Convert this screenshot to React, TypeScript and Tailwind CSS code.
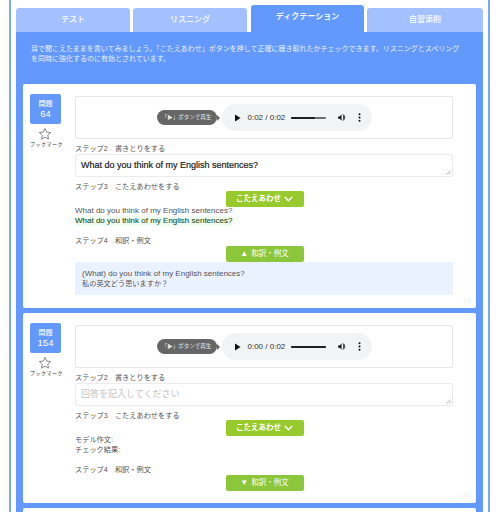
import React from "react";

const FONT = { fontFamily: '"Liberation Sans", "Noto Sans CJK JP", sans-serif' };

function Tab({ label, active, width }: { label: string; active?: boolean; width: string }) {
  return active ? (
    <div className={`flex h-[27px] ${width} items-center justify-center rounded-t-[3px] bg-[#6399fd] pb-[4px] text-[8px] font-bold text-[#f2f6ff]`}>
      {label}
    </div>
  ) : (
    <div className={`flex h-[24px] ${width} items-center justify-center rounded-t-[3px] bg-[#a2c1fe] text-[8px] font-bold text-[#eef4ff]`}>
      {label}
    </div>
  );
}

function Player({ time, progress }: { time: string; progress: number }) {
  return (
    <div className="flex h-[43px] items-center justify-center rounded-[2px] border border-[#e6e6e6]">
      <div className="relative mr-[5px] flex h-[15px] w-[60px] items-center justify-center rounded-full bg-[#666666] text-[5.5px] text-[#e4e4e4]">
        「▶」ボタンで再生
        <span className="absolute right-[-3px] h-0 w-0 border-y-[3px] border-l-[3px] border-y-transparent border-l-[#666666]" />
      </div>
      <div className="flex h-[27px] w-[150px] items-center rounded-full bg-[#f1f3f4] pl-[12px] text-[#1c1c1c]">
        <svg width="7" height="8" viewBox="0 0 7 8" className="mr-[7px]">
          <path d="M1 0.5 L6.5 4 L1 7.5 Z" fill="#111" />
        </svg>
        <span className="w-[41px] whitespace-nowrap text-[8px] text-[#333]">{time}</span>
        <div className="relative ml-[2px] h-[2px] w-[35px] rounded-full bg-[#6f6f6f]">
          <div className="h-full rounded-full bg-[#202020]" style={{ width: `${progress}%` }} />
        </div>
        <svg width="9" height="9" viewBox="0 0 24 24" className="ml-[11px]">
          <path d="M3 9v6h4l5 5V4L7 9H3z M16 7.5v9c1.5-.8 2.5-2.5 2.5-4.500S17.500 8.300 16 7.500z M15 3.500v2.200c2.900.9 5 3.500 5 6.300s-2.100 5.400-5 6.300v2.200c4-.9 7-4.500 7-8.500s-3-7.600-7-8.500z" fill="#111" />
        </svg>
        <svg width="3" height="9" viewBox="0 0 3 9" className="ml-[12px]">
          <circle cx="1.500" cy="1.200" r="1" fill="#111" />
          <circle cx="1.500" cy="4.500" r="1" fill="#111" />
          <circle cx="1.500" cy="7.800" r="1" fill="#111" />
        </svg>
      </div>
    </div>
  );
}

function GreenButton({ children, light }: { children: React.ReactNode; light?: boolean }) {
  return (
    <div className="flex justify-center pl-[1px]">
      <div
        className={`flex h-[16px] w-[78px] items-center justify-center rounded-[2px] text-[7.5px] text-white ${
          light ? "bg-[#97ca2d] font-bold" : "bg-[#8cc63a] text-[#eef7dd]"
        }`}
      >
        {children}
      </div>
    </div>
  );
}

function Chevron() {
  return (
    <svg width="9" height="6" viewBox="0 0 9 6" className="ml-[3px]">
      <path d="M0.800 1 L4.500 4.700 L8.200 1" fill="none" stroke="#fff" strokeWidth="1.500" />
    </svg>
  );
}

function Resize() {
  return (
    <svg width="5" height="5" viewBox="0 0 5 5" className="absolute bottom-[1px] right-[1px]">
      <path d="M0.500 4.500 L4.500 0.500 M2.800 4.500 L4.500 2.800" stroke="#888" strokeWidth="0.600" />
    </svg>
  );
}

function Label({ children }: { children: React.ReactNode }) {
  return <div className="h-[10px] pt-[1px] text-[7.2px] leading-[10px] text-[#555]">{children}</div>;
}

function Card({
  num,
  time,
  progress,
  answered,
}: {
  num: string;
  time: string;
  progress: number;
  answered?: boolean;
}) {
  return (
    <div className="relative flex rounded-[2px] bg-white pl-[7px] pr-[23px]">
      <div className="flex w-[45px] shrink-0 flex-col items-start pt-[10px]">
        <div className="flex h-[30px] w-[31px] flex-col items-center justify-center rounded-[2px] bg-[#6399fd] text-white">
          <span className="text-[7px] font-bold leading-[9px] text-[#e6efff]">問題</span>
          <span className="text-[9.500px] leading-[11px]">{num}</span>
        </div>
        <svg width="14" height="14" viewBox="0 0 24 24" className="ml-[8px] mt-[3px]">
          <path
            d="M12 2.500l2.900 6.200 6.800.8-5 4.600 1.300 6.700-6-3.300-6 3.300 1.300-6.700-5-4.600 6.800-.8z"
            fill="none"
            stroke="#777"
            strokeWidth="1.500"
            strokeLinejoin="round"
          />
        </svg>
        <div className="w-[31px] whitespace-nowrap text-center text-[5px] leading-[7px] tracking-[0.500px] text-[#333]">
          ブックマーク
        </div>
      </div>
      <div className={`flex min-w-0 flex-1 flex-col pt-[12px] ${answered ? "pb-[13px]" : "pb-[12px]"}`}>
        <Player time={time} progress={progress} />
        <div className="mt-[4px]">
          <Label>ステップ2　書きとりをする</Label>
        </div>
        <div className="relative mt-[1px] flex h-[23px] items-center rounded-[2px] border border-[#ececec] pl-[5px] text-[9px]">
          {answered ? (
            <span className="font-medium text-[#222]" style={{ WebkitTextStroke: "0.200px #222" }}>
              What do you think of my English sentences?
            </span>
          ) : (
            <span className="text-[#c4c4c4]">回答を記入してください</span>
          )}
          <Resize />
        </div>
        <div className="mt-[4px]">
          <Label>ステップ3　こたえあわせをする</Label>
        </div>
        <div className="mt-[0px]">
          <GreenButton light>
            こたえあわせ
            <Chevron />
          </GreenButton>
        </div>
        <div className="mt-[-1px] text-[8px] leading-[10px] text-[#555]">
          {answered ? (
            <>
              <div>What do you think of my English sentences?</div>
              <div className="w-fit bg-[#f0fbf0] text-[#1a521a]" style={{ WebkitTextStroke: "0.100px #1a521a" }}>
                What do you think of my English sentences?
              </div>
            </>
          ) : (
            <>
              <div className="text-[7.200px]">モデル作文:</div>
              <div className="text-[7.200px]">チェック結果:</div>
            </>
          )}
        </div>
        <div className="mt-[9px]">
          <Label>ステップ4　和訳・例文</Label>
        </div>
        <div className="mt-[1px]">
          <GreenButton>
            <span className="mr-[3px] text-[8px]">{answered ? "▲" : "▼"}</span>
            和訳・例文
          </GreenButton>
        </div>
        {answered && (
          <div className="h-[33px] bg-[#ebf2ff] pl-[7px] pt-[7px] text-[8px] leading-[9.500px] text-[#555]">
            <div>(What) do you think of my English sentences?</div>
            <div className="text-[7.200px]">私の英文どう思いますか？</div>
          </div>
        )}
      </div>
      <span className="absolute bottom-[2px] right-[5px] text-[7px] text-[#f0f0f0]">{num}</span>
    </div>
  );
}

export default function App() {
  return (
    <div className="h-[512px] w-[500px] overflow-hidden bg-white" style={FONT}>
      <div className="ml-[9px] h-[512px] w-[481px] border-x-2 border-[#7ba6fd] px-[5px] pt-[5px]">
        <div className="flex items-end">
          <Tab label="テスト" width="w-[114px]" />
          <div className="w-[3px]" />
          <Tab label="リスニング" width="w-[114px]" />
          <div className="w-[4px]" />
          <Tab label="ディクテーション" width="w-[113px]" active />
          <div className="w-[3px]" />
          <Tab label="自習添削" width="w-[116px]" />
        </div>
        <div className="h-[600px] w-[467px] bg-[#6399fd] px-[7px]">
          <div className="h-[52px] pl-[8px] pr-[13px] pt-[12px] text-[7px] leading-[9.500px] text-[#e6efff]">
            耳で聞こえたままを書いてみましょう。「こたえあわせ」ボタンを押して正確に聴き取れたかチェックできます。リスニングとスペリングを同時に強化するのに有効とされています。
          </div>
          <div className="flex flex-col gap-[5px]">
            <Card num="64" time="0:02 / 0:02" progress={70} answered />
            <Card num="154" time="0:00 / 0:02" progress={100} />
            <div className="h-[40px] rounded-[2px] bg-white" />
          </div>
        </div>
      </div>
    </div>
  );
}
